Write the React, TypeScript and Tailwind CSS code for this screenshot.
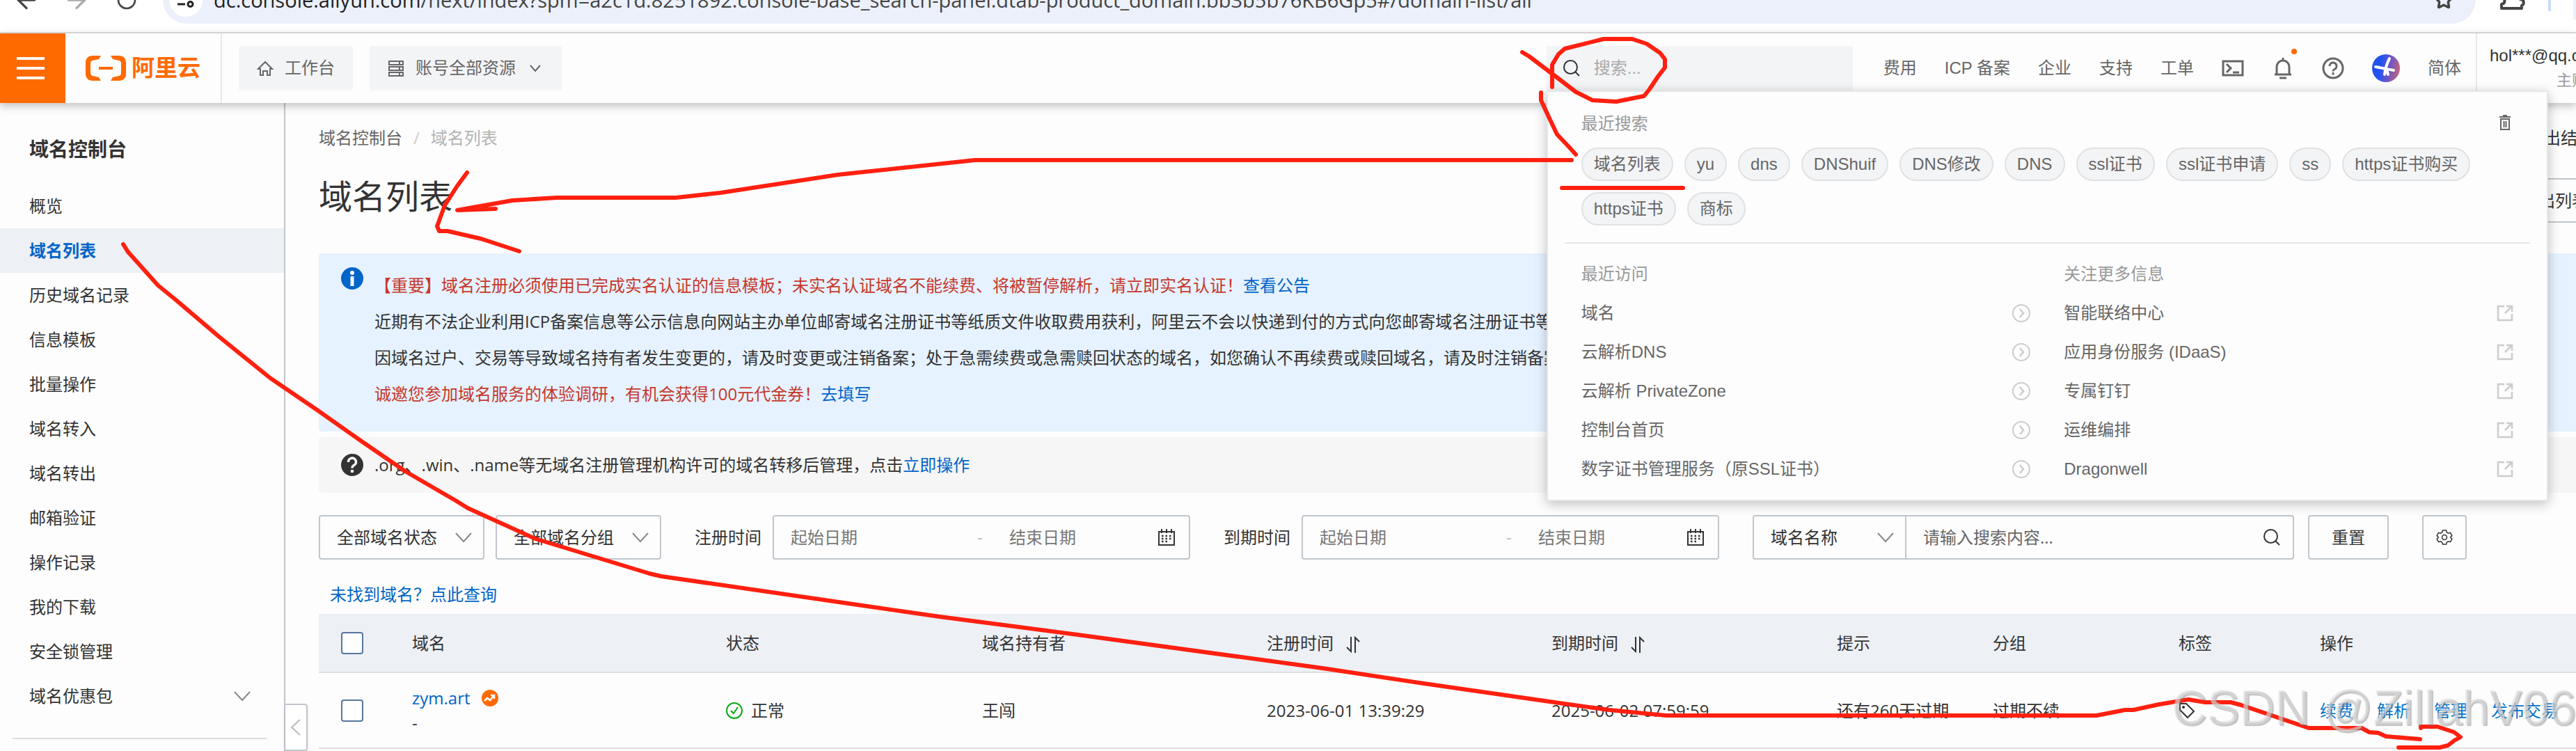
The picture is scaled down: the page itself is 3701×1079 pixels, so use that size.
import React, { memo } from 'react'
import { ArrowLeft, ArrowRight, RotateCw, Star } from 'lucide-react'
import { clsx } from 'clsx'

const MENU = [
  '概览',
  '域名列表',
  '历史域名记录',
  '信息模板',
  '批量操作',
  '域名转入',
  '域名转出',
  '邮箱验证',
  '操作记录',
  '我的下载',
  '安全锁管理',
  '域名优惠包',
]

const TAGS = ['域名列表', 'yu', 'dns', 'DNShuif', 'DNS修改', 'DNS', 'ssl证书', 'ssl证书申请', 'ss', 'https证书购买', 'https证书', '商标']

const RECENT = ['域名', '云解析DNS', '云解析 PrivateZone', '控制台首页', '数字证书管理服务（原SSL证书）']

const MORE = ['智能联络中心', '应用身份服务 (IDaaS)', '专属钉钉', '运维编排', 'Dragonwell']

export default function App() {
  return (
    <div className="relative flex min-h-screen flex-col overflow-hidden bg-[#fdfdfd] font-['Open_Sans','Noto_Sans_CJK_SC',sans-serif] text-2xl text-[#333]">
      <BrowserBar />
      <Header />
      <div className="flex flex-1">
        <Sidebar />
        <main className="relative min-w-0 flex-1 pt-8 pl-12">
          <Collapse />
          <PageTitle />
          <Notices />
          <Filters />
          <a href="#lookup" className="ml-4 mt-8 block h-9 leading-9 text-[#0064c8]">未找到域名？点此查询</a>
          <DomainTable />
        </main>
      </div>
      <Marks />
      <div className="pointer-events-none absolute right-0 bottom-6 z-40 font-['Liberation_Sans',sans-serif] text-[70px] leading-[76px] whitespace-nowrap text-[#dedede]/60 [text-shadow:2px_2px_1px_rgba(120,120,120,0.45)]">
        CSDN @ZillahV06
      </div>
    </div>
  )
}

// 浏览器地址栏，只露出下半部分
const BrowserBar = memo(() => (
  <div className="flex h-12 items-end overflow-hidden border-b-2 border-[#dfdfdf] bg-white">
    <div className="flex h-[92px] w-full shrink-0 items-center gap-8 pl-[18px] text-[#444]">
      <button aria-label="后退"><ArrowLeft className="size-10" strokeWidth={2} /></button>
      <button aria-label="前进"><ArrowRight className="size-10 text-[#aaa]" strokeWidth={2} /></button>
      <button aria-label="刷新" className="flex size-10 items-center justify-center"><RotateCw className="size-8" strokeWidth={2} /></button>
      <div className="flex h-[68px] flex-1 items-center rounded-full bg-[#ebf0fa] pr-8 pl-[9px]">
        <span className="flex size-12 items-center justify-center rounded-full bg-white">
          <svg viewBox="0 0 24 24" className="size-6" fill="none" stroke="#222" strokeWidth="3">
            <circle cx="5" cy="5" r="3.5" />
            <path d="M12 5h12M0 18h11" />
            <circle cx="18.500" cy="18" r="3.500" />
          </svg>
        </span>
        <span className="ml-4 text-[29px] leading-9 whitespace-nowrap">
          <span className="text-[#1f1f1f]">dc.console.aliyun.com</span>
          /next/index?spm=a2c1d.8251892.console-base_search-panel.dtab-product_domain.bb3b5b76KB6Gp5#/domain-list/all
        </span>
        <Star className="ml-auto size-7" strokeWidth={3} />
      </div>
      <svg viewBox="0 0 40 40" className="size-10" fill="none" stroke="currentColor" strokeWidth="4" strokeLinejoin="round">
        <path d="M5 11h9c0-8 10-8 10 0h8v8c6 0 6 8 2 9v4H5V26c6-1 6-8 0-9z" />
      </svg>
      <span className="h-8 w-1 bg-[#c9dcfb]" />
      <span className="h-14 w-1 bg-[#ebf0fa]" />
    </div>
  </div>
))

const Header = memo(() => (
  <header className="relative z-20 flex h-[100px] bg-[#fdfdfd] font-['Liberation_Sans','Noto_Sans_CJK_SC',sans-serif] text-[#666] shadow-[0_4px_12px_rgba(0,0,0,0.25)]">
    <button aria-label="菜单" className="flex w-[94px] shrink-0 flex-col items-start justify-center gap-[10px] bg-[#ff6a00] pl-6">
      <span className="h-1 w-10 bg-white" />
      <span className="h-1 w-10 bg-white" />
      <span className="h-1 w-10 bg-white" />
    </button>
    <a href="#home" className="flex w-[225px] shrink-0 items-center gap-2 border-r-2 border-[#e8e8e8] pl-[29px] text-[#ff6a00]">
      <svg viewBox="0 0 58 36" className="h-9 w-[58px]" fill="#ff6a00">
        <path d="M22 0H10C4 0 0 4 0 10v16c0 6 4 10 10 10h12l-3-5-9-2c-2-.5-3-2-3-4V11c0-2 1-3.500 3-4l9-2zM36 0h12c6 0 10 4 10 10v16c0 6-4 10-10 10H36l3-5 9-2c2-.5 3-2 3-4V11c0-2-1-3.500-3-4l-9-2zM19 16h20v4H19z" />
      </svg>
      <span className="text-[33px] leading-10 font-bold">阿里云</span>
    </a>
    <div className="ml-6 flex items-center gap-6">
      <button className="flex h-16 items-center gap-4 rounded bg-[#f3f4f6] px-[26px]">
        <svg viewBox="0 0 24 24" className="size-6" fill="none" stroke="currentColor" strokeWidth="2">
          <path d="M2 13 12 3l10 10h-3v9h-4v-6H9v6H5v-9z" />
        </svg>
        工作台
      </button>
      <button className="flex h-16 items-center gap-4 rounded bg-[#f3f4f6] px-[26px]">
        <svg viewBox="0 0 24 24" className="size-6" fill="none" stroke="currentColor" strokeWidth="2">
          <path d="M2 2h20v5H2zM2 10h20v5H2zM2 18h20v5H2zM17 3v3M17 11v3M17 19v3" />
        </svg>
        账号全部资源
        <svg viewBox="0 0 24 24" className="size-6" fill="none" stroke="currentColor" strokeWidth="2">
          <path d="m5 8 7 8 7-8" />
        </svg>
      </button>
    </div>
    <div className="relative my-auto ml-auto h-16 w-[440px] bg-[#f2f4f6]">
      <label className="flex h-full items-center pl-6">
        <SearchIcon />
        <input
          aria-label="搜索"
          placeholder="搜索..."
          className="ml-5 w-0 flex-1 bg-transparent outline-none placeholder:text-[#aaa]"
        />
      </label>
      <SearchPanel />
    </div>
    <nav className="ml-11 flex shrink-0 items-center gap-10 pr-[21px]">
      <a href="#fee">费用</a>
      <a href="#icp">ICP 备案</a>
      <a href="#company">企业</a>
      <a href="#support">支持</a>
      <a href="#ticket">工单</a>
      <button aria-label="命令行">
        <svg viewBox="0 0 32 32" className="block size-8" fill="none" stroke="currentColor" strokeWidth="3">
          <path d="M2 6h28v20H2zM7 10l6 6-6 6M16 22h9" />
        </svg>
      </button>
      <button aria-label="消息" className="relative">
        <svg viewBox="0 0 32 32" className="block size-8" fill="none" stroke="currentColor" strokeWidth="3">
          <path d="M4 25h24M7 25V14a9 9 0 0 1 18 0v11M16 1v4" />
          <path d="M11 30h10" />
        </svg>
        <span className="absolute -top-3 -right-1 size-2 rounded-full bg-[#ff6a00]" />
      </button>
      <button aria-label="帮助">
        <svg viewBox="0 0 32 32" className="block size-8" fill="none" stroke="currentColor" strokeWidth="3">
          <circle cx="16" cy="16" r="14" />
          <path d="M11 13a5 5 0 1 1 7 4.500c-1.500.7-2 1.500-2 3M16 22v3.500" />
        </svg>
      </button>
      <button aria-label="助手" className="size-10 rounded-full bg-[linear-gradient(100deg,#1f52f0_30%,#6b55c8_60%,#d86a6a_100%)]">
        <svg viewBox="0 0 40 40" className="block size-10" fill="none" stroke="#fff" strokeWidth="4" strokeLinecap="round">
          <path d="M25 6c-4 8-6 14-7 23M5 18c9 2 16 3 26 5M21 22l2 7" />
        </svg>
      </button>
      <button>简体</button>
    </nav>
    <div className="flex w-36 shrink-0 flex-col justify-center overflow-hidden border-l-2 border-[#e8e8e8] pl-[18px] whitespace-nowrap">
      <span className="leading-9 text-[#333]">hol***@qq.com</span>
      <span className="ml-24 text-[22px] leading-9 text-[#999]">主账号</span>
    </div>
  </header>
))

const SearchPanel = memo(() => (
  <div className="absolute top-full left-0 w-[1439px] border-2 border-[#e5e6e8] bg-[#fdfdfd] px-6 pb-4 shadow-[0_4px_16px_rgba(0,0,0,0.25)]">
    <div className="flex h-20 items-end justify-between px-6 pt-6 pb-4 text-[#999]">
      <span className="leading-9">最近搜索</span>
      <button aria-label="清空" className="self-center text-[#666]">
        <svg viewBox="0 0 24 24" className="block size-6" fill="none" stroke="currentColor" strokeWidth="2">
          <path d="M4 4h16M9 2h6M6 7h12v15H6zM10.500 10v9M13.500 10v9" />
        </svg>
      </button>
    </div>
    <div className="flex flex-wrap gap-4 px-6 pb-6">
      {TAGS.map((tag) => (
        <button key={tag} className="h-12 rounded-full border-2 border-[#e0e1e3] bg-[#f3f4f6] px-4 leading-none">
          {tag}
        </button>
      ))}
    </div>
    <hr className="border-t-2 border-[#e5e6e8]" />
    <div className="grid grid-cols-2 gap-12 px-6 pt-6">
      <PanelList title="最近访问" items={RECENT} icon={<ArrowCircle />} />
      <PanelList title="关注更多信息" items={MORE} icon={<OpenIcon />} />
    </div>
  </div>
))

function PanelList(props: { title: string; items: string[]; icon: React.ReactNode }) {
  return (
    <div>
      <h3 className="mb-2 h-10 leading-10 text-[#999]">{props.title}</h3>
      {props.items.map((item) => (
        <a key={item} href="#item" className="flex h-14 items-center justify-between">
          {item}
          {props.icon}
        </a>
      ))}
    </div>
  )
}

const Sidebar = memo(() => (
  <aside className="w-[410px] shrink-0 border-r-2 border-[#c0c6cc]">
    <h2 className="mt-12 mb-8 pl-[42px] text-[28px] leading-9 font-bold">域名控制台</h2>
    {MENU.map((item) => (
      <a
        key={item}
        href="#menu"
        className={clsx(
          'flex h-16 items-center justify-between pr-12 pl-[42px]',
          item === '域名列表' && 'bg-[#edf0f5] font-bold text-[#0064c8]'
        )}
      >
        {item}
        {item === '域名优惠包' && <Chevron />}
      </a>
    ))}
    <hr className="mr-6 ml-[18px] mt-7 border-t-2 border-[#dedfe1]" />
  </aside>
))

const Collapse = memo(() => (
  <button
    aria-label="收起菜单"
    className="absolute bottom-0 left-0 flex h-[68px] w-8 items-center justify-center rounded-r border-2 border-l-0 border-[#c0c6cc] bg-white shadow-md"
  >
    <svg viewBox="0 0 16 24" className="h-6 w-4" fill="none" stroke="#bbb" strokeWidth="2">
      <path d="M14 1 2 12l12 11" />
    </svg>
  </button>
))

const PageTitle = memo(() => (
  <>
    <div className="flex h-9 items-center leading-9">
      <a href="#console" className="text-[#666]">域名控制台</a>
      <span className="mx-4 text-[#ccc]">/</span>
      <span className="text-[#b3b3b3]">域名列表</span>
      <a href="#result" className="ml-auto w-[70px] overflow-hidden whitespace-nowrap">导出结果</a>
    </div>
    <div className="mt-10 flex h-16 items-start">
      <h1 className="text-5xl leading-[52px]">域名列表</h1>
      <button className="ml-auto h-16 w-[104px] overflow-hidden rounded-l border-2 border-r-0 border-[#c0c6cc] pl-6 text-left whitespace-nowrap">
        导出列表
      </button>
    </div>
  </>
))

const Notices = memo(() => (
  <>
    <div className="mt-11 flex gap-4 rounded-l bg-[#e6f2ff] px-8 pt-5 pb-7">
      <svg viewBox="0 0 32 32" className="size-8 shrink-0" fill="#0064c8">
        <circle cx="16" cy="16" r="16" />
        <circle cx="16" cy="8" r="3" fill="#fff" />
        <path d="M13.500 13h5v14h-5z" fill="#fff" />
      </svg>
      <div className="leading-[52px] whitespace-nowrap">
        <p className="text-[#c7372b]">
          【重要】域名注册必须使用已完成实名认证的信息模板；未实名认证域名不能续费、将被暂停解析，请立即实名认证！
          <a href="#notice" className="text-[#0064c8]">查看公告</a>
        </p>
        <p>近期有不法企业利用ICP备案信息等公示信息向网站主办单位邮寄域名注册证书等纸质文件收取费用获利，阿里云不会以快递到付的方式向您邮寄域名注册证书等</p>
        <p>因域名过户、交易等导致域名持有者发生变更的，请及时变更或注销备案；处于急需续费或急需赎回状态的域名，如您确认不再续费或赎回域名，请及时注销备案</p>
        <p className="text-[#c7372b]">
          诚邀您参加域名服务的体验调研，有机会获得100元代金券！
          <a href="#survey" className="text-[#0064c8]">去填写</a>
        </p>
      </div>
    </div>
    <div className="mt-2 flex h-20 items-center gap-4 rounded-l bg-[#f6f6f6] px-8">
      <svg viewBox="0 0 32 32" className="size-8 shrink-0" fill="none">
        <circle cx="16" cy="16" r="16" fill="#333" />
        <path d="M10.500 12a5.500 5.500 0 1 1 8 4.500c-2 1-2.500 2-2.500 4" stroke="#fff" strokeWidth="3.500" />
        <circle cx="16" cy="25" r="2.300" fill="#fff" />
      </svg>
      <p>
        .org、.win、.name等无域名注册管理机构许可的域名转移后管理，点击<a href="#transfer" className="text-[#0064c8]">立即操作</a>
      </p>
    </div>
  </>
))

const Filters = memo(() => (
  <div className="mt-8 flex h-16 items-center">
    <Select label="全部域名状态" className="w-[238px] rounded border-2" />
    <Select label="全部域名分组" className="ml-4 w-[238px] rounded border-2" />
    <DateRange label="注册时间" />
    <DateRange label="到期时间" />
    <div className="ml-12 flex h-16 w-[778px] rounded border-2 border-[#c0c6cc]">
      <Select label="域名名称" className="w-[219px] border-r-2" />
      <input
        aria-label="搜索内容"
        placeholder="请输入搜索内容..."
        className="w-0 flex-1 bg-transparent pl-6 outline-none placeholder:text-[#666]"
      />
      <button aria-label="查询" className="px-[18px]"><SearchIcon /></button>
    </div>
    <button className="ml-5 h-16 w-[116px] rounded border-2 border-[#c0c6cc]">重置</button>
    <button aria-label="设置" className="ml-12 flex h-16 w-[64px] items-center justify-center rounded border-2 border-[#c0c6cc]">
      <svg viewBox="0 0 24 24" className="size-6" fill="none" stroke="currentColor" strokeWidth="1.500">
        <path d="M9.500 2h5l1 3 2 1.200 3-.8 2.300 4.200-2.200 2.400 2.200 2.400-2.300 4.200-3-.8-2 1.200-1 3h-5l-1-3-2-1.200-3 .8-2.300-4.200L3.400 12 1.200 9.600l2.300-4.200 3 .8 2-1.200z" />
        <circle cx="12" cy="12" r="3.500" />
      </svg>
    </button>
  </div>
))

function Select(props: { label: string; className: string }) {
  return (
    <div className={clsx('relative flex h-full items-center border-[#c0c6cc]', props.className)}>
      <select aria-label={props.label} className="h-full w-full appearance-none bg-transparent pl-6 outline-none">
        <option>{props.label}</option>
      </select>
      <span className="pointer-events-none absolute right-4"><Chevron /></span>
    </div>
  )
}

function DateRange(props: { label: string }) {
  return (
    <div className="ml-12 flex items-center gap-4">
      <span>{props.label}</span>
      <div className="flex h-16 w-[600px] items-center rounded border-2 border-[#c0c6cc] pr-5 pl-6">
        <input aria-label={`${props.label}起始`} placeholder="起始日期" className="w-[260px] bg-transparent outline-none placeholder:text-[#777]" />
        <span className="w-[54px] pl-2 text-[#bbb]">-</span>
        <input aria-label={`${props.label}结束`} placeholder="结束日期" className="w-0 flex-1 bg-transparent outline-none placeholder:text-[#777]" />
        <svg viewBox="0 0 24 24" className="size-6" fill="none" stroke="#333" strokeWidth="2">
          <path d="M1 4h22v19H1zM5 0v6M12 0v6M19 0v6" />
          <path d="M5 10h15M5 14h15M5 18h10" strokeDasharray="2.500 3" strokeWidth="2.500" />
        </svg>
      </div>
    </div>
  )
}

const DomainTable = memo(() => (
  <table className="mt-[10px] w-full table-fixed text-left">
    <colgroup>
      <col className="w-[102px]" />
      <col className="w-[451px]" />
      <col className="w-[368px]" />
      <col className="w-[409px]" />
      <col className="w-[409px]" />
      <col className="w-[410px]" />
      <col className="w-[224px]" />
      <col className="w-[267px]" />
      <col className="w-[203px]" />
      <col />
    </colgroup>
    <thead>
      <tr className="h-[84px] border-b-2 border-[#dde1e6] bg-[#edf0f5] *:pl-8 *:font-normal">
        <th><Checkbox label="全选" /></th>
        <th>域名</th>
        <th>状态</th>
        <th>域名持有者</th>
        <th>注册时间<SortIcon /></th>
        <th>到期时间<SortIcon /></th>
        <th>提示</th>
        <th>分组</th>
        <th>标签</th>
        <th>操作</th>
      </tr>
    </thead>
    <tbody>
      <tr className="h-[109px] border-b-2 border-[#dedfe1] *:pl-8">
        <td><Checkbox label="选择 zym.art" /></td>
        <td className="leading-9">
          <div className="flex items-center gap-4">
            <a href="#zym" className="text-[#0064c8]">zym.art</a>
            <svg viewBox="0 0 24 24" className="size-6" fill="none" stroke="#fff" strokeWidth="2.500">
              <circle cx="12" cy="12" r="12" fill="#ff6a00" stroke="none" />
              <path d="m4 16 4-4 4 3 6-7M13 8h5v5" />
            </svg>
          </div>
          <div>-</div>
        </td>
        <td>
          <div className="flex items-center gap-3">
            <svg viewBox="0 0 24 24" className="size-6" fill="none" stroke="#0ba810" strokeWidth="2">
              <circle cx="12" cy="12" r="11" />
              <path d="m7 12 4 4 6-9" />
            </svg>
            正常
          </div>
        </td>
        <td>王闯</td>
        <td>2023-06-01 13:39:29</td>
        <td>2025-06-02 07:59:59</td>
        <td>还有260天过期</td>
        <td>过期不续</td>
        <td>
          <svg viewBox="0 0 24 24" className="size-6" fill="none" stroke="#333" strokeWidth="2">
            <path d="M2 2h9l11 11-9 9L2 11z" />
            <circle cx="7" cy="7" r="1" />
          </svg>
        </td>
        <td>
          <div className="flex gap-[34px] whitespace-nowrap text-[#0070cc]">
            <a href="#renew">续费</a>
            <a href="#resolve">解析</a>
            <a href="#manage">管理</a>
            <a href="#trade">发布交易</a>
          </div>
        </td>
      </tr>
    </tbody>
  </table>
))

// 手绘红色标注
const Marks = memo(() => (
  <svg
    viewBox="0 0 3701 1079"
    className="pointer-events-none absolute inset-0 z-30 h-full w-full"
    fill="none"
    stroke="#ff2010"
    strokeWidth="6"
    strokeLinejoin="round"
    strokeLinecap="round"
  >
    <path d="M2187 75 2197 81 2230 106 2264 132 2288 144 2322 146 2362 138 2370 128 2382 110 2392 97 2392 85 2385 76 2366 63 2345 56 2304 56 2248 70 2239 78 2230 93 2230 125" />
    <path d="M2214 133V144L2227 172 2237 193 2255 212 2264 222" />
    <path d="M2258 230H1401L1204 251 1035 277 971 284H800L736 288 657 302 712 300" />
    <path d="M671 248 657 267 639 295 628 325 631 332H643L691 343 746 361" />
    <path d="M2244 270H2418" />
    <path d="M177 351 184 362 227 410 254 432 315 484 388 543 457 590 518 633 582 677 656 720 672 730 769 774 933 824 950 828 1253 872 1350 886 1556 913 1900 960 2039 981 2233 1009 2312 1020 2394 1028H3012L3053 1020H3065L3102 1012 3144 1005 3168 1009H3205L3220 1013 3317 1046H3393L3404 1052 3417 1053 3428 1058 3477 1062" />
    <path d="M3478 1046V1044H3502L3526 1052 3535 1059 3526 1064 3517 1071 3505 1074H3446" />
  </svg>
))

function Checkbox(props: { label: string }) {
  return (
    <input
      type="checkbox"
      aria-label={props.label}
      className="block size-8 appearance-none rounded border-2 border-[#56789f] bg-white"
    />
  )
}

function Chevron() {
  return (
    <svg viewBox="0 0 24 24" className="size-6" fill="none" stroke="#888" strokeWidth="2">
      <path d="m1 6 11 12L23 6" />
    </svg>
  )
}

function SearchIcon() {
  return (
    <svg viewBox="0 0 24 24" className="size-6 shrink-0" fill="none" stroke="#333" strokeWidth="2">
      <circle cx="10.500" cy="10.500" r="9.500" />
      <path d="m17 17 6 6" />
    </svg>
  )
}

function SortIcon() {
  return (
    <svg viewBox="0 0 24 24" className="ml-4 inline size-6" fill="none" stroke="#333" strokeWidth="2">
      <path d="M9 1v21l-6-6M15 24V2l6 6" />
    </svg>
  )
}

function ArrowCircle() {
  return (
    <svg viewBox="0 0 26 26" className="size-[26px]" fill="none" stroke="#ccc" strokeWidth="2">
      <circle cx="13" cy="13" r="12" />
      <path d="m11 7 5 6-5 6" strokeWidth="2.500" />
    </svg>
  )
}

function OpenIcon() {
  return (
    <svg viewBox="0 0 24 24" className="size-6" fill="none" stroke="#ccc" strokeWidth="2.500">
      <path d="M11 2H2v20h20V13M14 2h8v8M22 2 12 12" />
    </svg>
  )
}
